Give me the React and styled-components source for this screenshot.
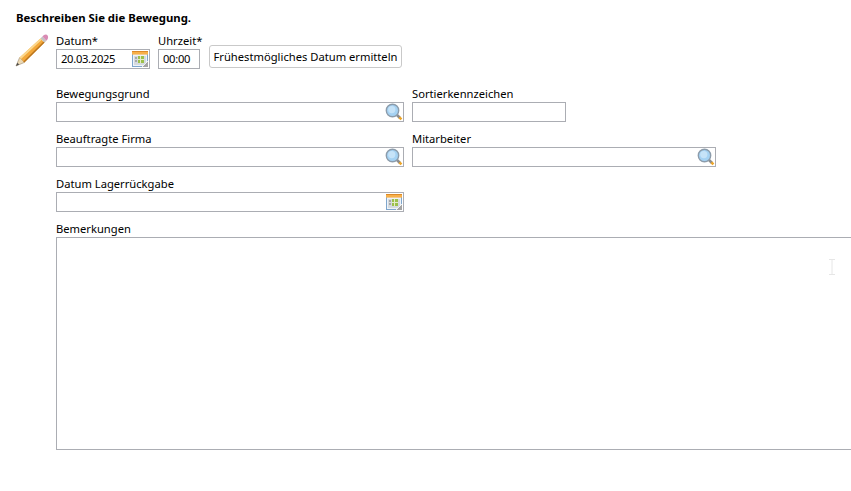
import React from "react";
import styled, { createGlobalStyle } from "styled-components";

const GlobalStyle = createGlobalStyle`
  html, body {
    margin: 0;
    height: 100%;
    overflow: hidden;
    background: #fff;
  }
  body {
    font-family: "Noto Sans", "Open Sans", sans-serif;
    font-size: 11.2px;
    color: #000;
  }
`;

const PencilIcon = () => (
  <svg width="34" height="36" viewBox="0 0 34 36">
    <path d="M1 34 L4.6 25.6 L9.4 30.4 Z" fill="#ecd9b4" stroke="#9a8a70" strokeWidth="0.6" />
    <path d="M1 34 L2.4 30.8 L4.2 32.6 Z" fill="#4a4a4a" />
    <path d="M4.6 25.6 L25.4 6.4 L29.6 10.6 L9.4 30.4 Z" fill="#f3a83a" />
    <path d="M4.6 25.6 L25.4 6.4 L26.8 7.8 L6 27 Z" fill="#fbd88e" />
    <path d="M8.4 29.4 L28.6 9.6 L29.6 10.6 L9.4 30.4 Z" fill="#b8741f" />
    <path d="M25.4 6.4 L27.4 4.6 L31.4 8.8 L29.6 10.6 Z" fill="#c4c4c4" />
    <path d="M27.4 4.6 L29 3 C30.4 2 32 2.4 32.6 3.4 C33.4 4.6 33.2 6 32.4 7.4 L31.4 8.8 Z" fill="#d98bb4" />
  </svg>
);

const CalendarIcon = () => (
  <svg width="18" height="18" viewBox="0 0 18 18">
    <rect x="1.5" y="1.5" width="15" height="15" fill="#eef3f8" stroke="#7fa6cc" />
    <rect x="1" y="1" width="16" height="3.6" fill="#f7b04a" />
    <rect x="1" y="1" width="16" height="1" fill="#dd8a28" />
    <rect x="3" y="6" width="12" height="9" fill="#d5dadf" />
    <rect x="7" y="6" width="6" height="7" fill="#9cc04a" />
    <rect x="9" y="6" width="1" height="7" fill="#e4ecc8" />
    <rect x="7" y="9" width="6" height="1" fill="#e4ecc8" />
    <rect x="4" y="7" width="2" height="2" fill="#a8a8a8" />
    <rect x="4" y="10" width="2" height="2" fill="#a8a8a8" />
    <path d="M11 17 L17 11 L17 17 Z" fill="#a4a4a4" />
    <path d="M11 17 L17 11" stroke="#fff" strokeWidth="0.8" />
  </svg>
);

const SearchIcon = () => (
  <svg width="18" height="18" viewBox="0 0 18 18">
    <path d="M11.5 11.5 L15 15" stroke="#8d8d8d" strokeWidth="2.6" />
    <path d="M14.4 14.4 L16.4 16.4" stroke="#eda528" strokeWidth="2.6" />
    <circle cx="7.5" cy="7.5" r="6.2" fill="#a5d2f3" stroke="#8c9cab" strokeWidth="1.4" />
    <circle cx="6.8" cy="6.6" r="3.6" fill="#c6e3f8" />
  </svg>
);

const IBeam = () => (
  <svg width="8" height="16" viewBox="0 0 8 16">
    <path d="M1 .5 H7 M1 15.5 H7 M4 .5 V15.5" stroke="#e6e6e6" fill="none" />
  </svg>
);

const Field = ({ label, width, icon, value }) => (
  <FieldBox $width={width}>
    <Label>{label}</Label>
    <InputBox>
      {value && <Value>{value}</Value>}
      {icon === "search" && <SearchIcon />}
      {icon === "calendar" && <CalendarIcon />}
    </InputBox>
  </FieldBox>
);

export default function App() {
  return (
    <>
      <GlobalStyle />
      <Page>
        <Title>Beschreiben Sie die Bewegung.</Title>
        <TopRow>
          <PencilSlot>
            <PencilIcon />
          </PencilSlot>
          <Field label="Datum*" width={94} icon="calendar" value="20.03.2025" />
          <Field label="Uhrzeit*" width={42} value="00:00" />
          <ActionButton>Frühestmögliches Datum ermitteln</ActionButton>
        </TopRow>
        <FormGrid>
          <Field label="Bewegungsgrund" width={348} icon="search" />
          <Field label="Sortierkennzeichen" width={154} />
          <Field label="Beauftragte Firma" width={348} icon="search" />
          <Field label="Mitarbeiter" width={304} icon="search" />
          <Field label="Datum Lagerrückgabe" width={348} icon="calendar" />
          <span />
        </FormGrid>
        <NotesBox>
          <Label>Bemerkungen</Label>
          <NotesArea>
            <CursorMark>
              <IBeam />
            </CursorMark>
          </NotesArea>
        </NotesBox>
      </Page>
    </>
  );
}

const Page = styled.div`
  padding: 10px 0 0 16px;
  width: 835px;
  overflow: hidden;
`;

const Title = styled.div`
  font-weight: 700;
  font-size: 11.35px;
  line-height: 16px;
`;

const TopRow = styled.div`
  display: flex;
  align-items: flex-start;
  margin-top: 6px;
`;

const PencilSlot = styled.div`
  flex: none;
  width: 40px;
  height: 36px;
  display: flex;

  svg {
    margin-left: -1px;
  }
`;

const FieldBox = styled.div`
  display: flex;
  flex-direction: column;
  flex: none;
  width: ${(p) => p.$width}px;
  margin-right: 8px;
`;

const Label = styled.div`
  line-height: 17px;
  height: 17px;
  white-space: nowrap;
`;

const InputBox = styled.div`
  box-sizing: border-box;
  height: 20px;
  border: 1px solid #abadb3;
  display: flex;
  align-items: center;
  padding: 0 0 0 4px;
  line-height: 18px;
  white-space: nowrap;

  svg {
    flex: none;
    margin-left: auto;
  }
`;

const Value = styled.span`
  letter-spacing: -0.3px;
`;

const ActionButton = styled.button`
  box-sizing: border-box;
  height: 23px;
  width: 193px;
  margin: 13px 0 0 1px;
  padding: 0;
  background: #fff;
  border: 1px solid #c9c9c9;
  border-radius: 3px;
  font: inherit;
  color: #000;
  white-space: nowrap;
`;

const FormGrid = styled.div`
  display: grid;
  grid-template-columns: 356px 1fr;
  row-gap: 8px;
  margin: 16px 0 0 40px;
`;

const NotesBox = styled.div`
  margin: 8px 0 0 40px;
`;

const NotesArea = styled.div`
  position: relative;
  box-sizing: border-box;
  width: 840px;
  height: 213px;
  border: 1px solid #abadb3;
`;

const CursorMark = styled.div`
  position: absolute;
  left: 771px;
  top: 21px;
`;
